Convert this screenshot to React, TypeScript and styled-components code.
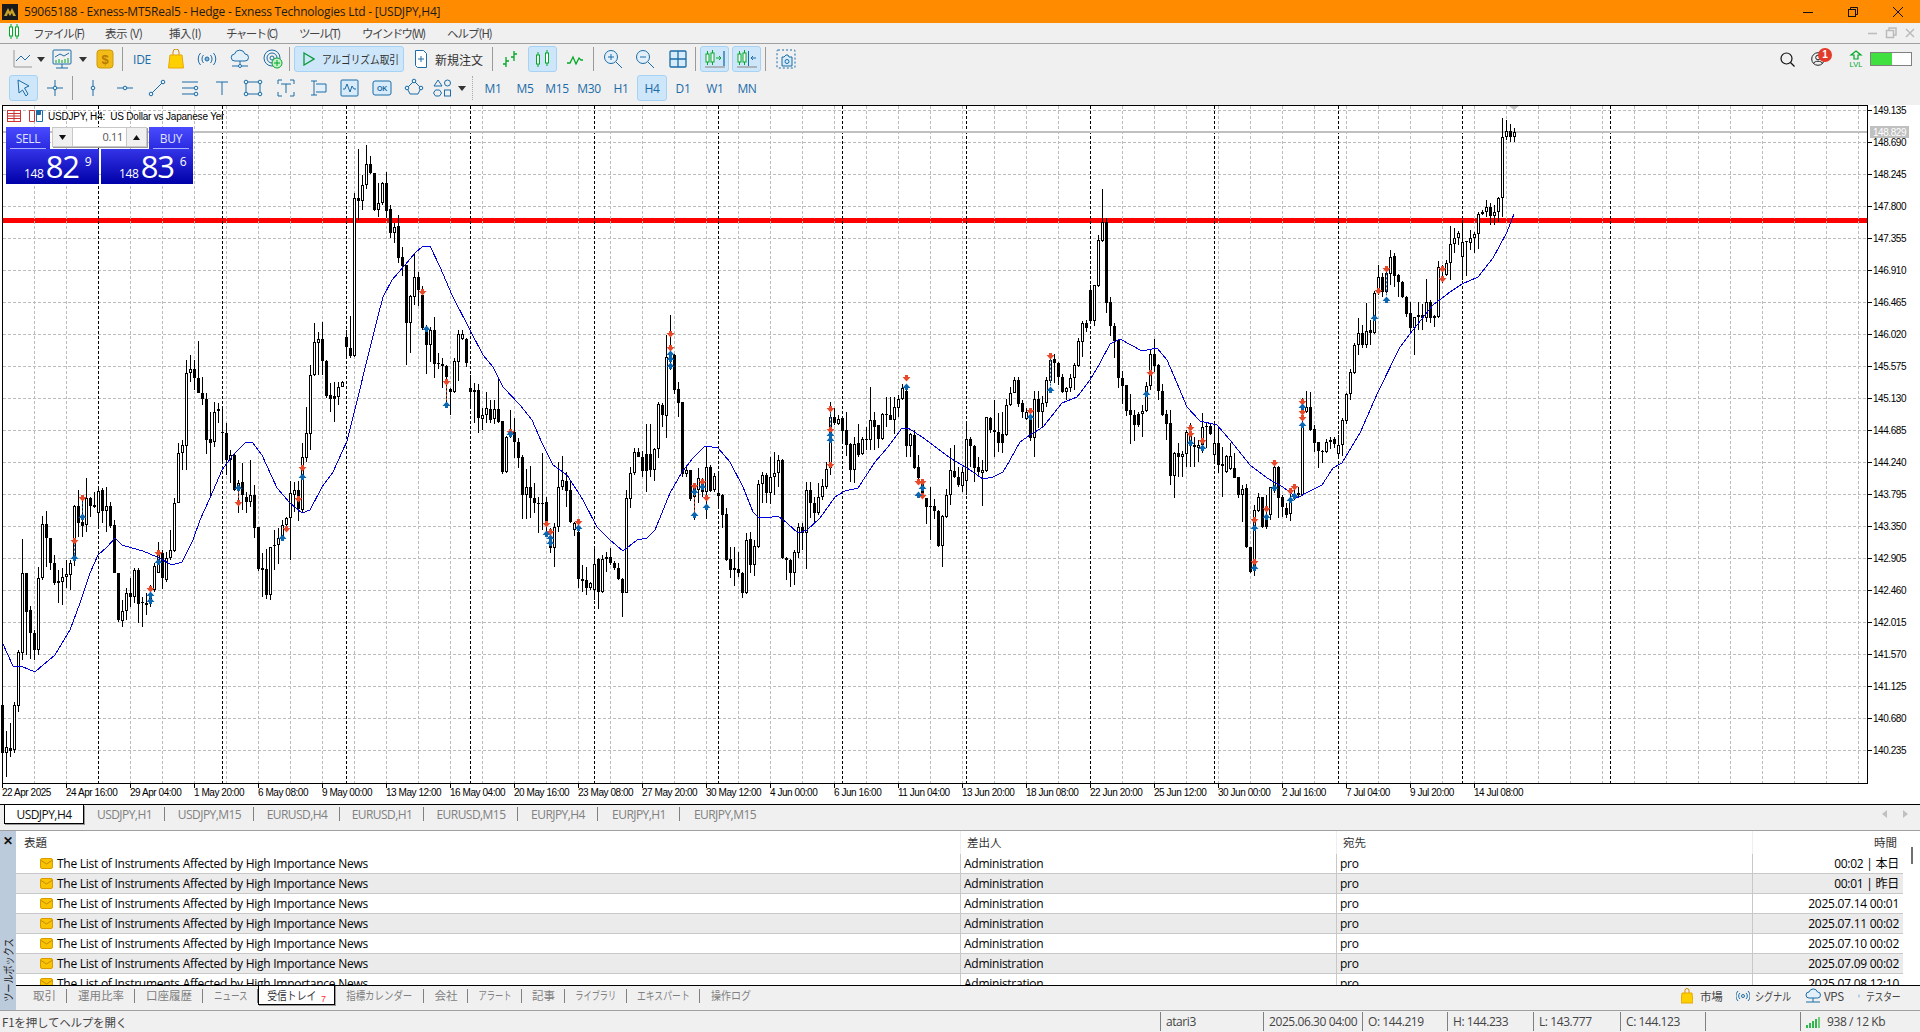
import React from "react";
import styled, { createGlobalStyle } from "styled-components";

const UI = `"Open Sans", "Noto Sans CJK JP", sans-serif`;
const JP = `"Noto Sans CJK JP", "Open Sans", sans-serif`;
const BLUE = "#1b6ca8";
const GREEN = "#00a826";

const Global = createGlobalStyle`
  html, body { margin: 0; padding: 0; overflow: hidden; background: #f0f0f0; }
  * { box-sizing: border-box; }
`;

const Page = styled.div`
  width: 1920px;
  height: 1032px;
  display: flex;
  flex-direction: column;
  overflow: hidden;
  background: #f0f0f0;
  font-family: ${UI};
  color: #333;
`;

const TitleBar = styled.div`
  height: 23px;
  background: #ff8c00;
  display: flex;
  align-items: center;
  padding-left: 2px;
  color: #1a1a1a;
  font-size: 12px;
  letter-spacing: -0.22px;
`;

const TitleLogo = styled.div`
  width: 16px;
  height: 16px;
  background: #1a1a1a;
  margin-right: 6px;
  display: flex;
  align-items: center;
  justify-content: center;
`;

const WinButtons = styled.div`
  margin-left: auto;
  display: flex;
`;

const WinButton = styled.div`
  width: 45px;
  height: 23px;
  display: flex;
  align-items: center;
  justify-content: center;
`;

const MenuBar = styled.div`
  height: 21px;
  border-bottom: 1px solid #a0a0a0;
  display: flex;
  align-items: center;
  padding-left: 8px;
  font-family: ${JP};
  font-size: 11.5px;
  color: #444;
`;

const MenuItem = styled.div<{ $w: number; $sp?: number }>`
  width: ${p => p.$w}px;
  white-space: nowrap;
  letter-spacing: ${p => p.$sp ?? -0.4}px;
`;

const SubButtons = styled.div`
  margin-left: auto;
  display: flex;
  gap: 7px;
  padding-right: 4px;
`;

const Toolbars = styled.div`
  height: 61px;
  display: flex;
  flex-direction: column;
`;

const ToolRow = styled.div<{ $pad: number; $lift?: number }>`
  height: 30px;
  margin-top: ${p => -(p.$lift ?? 0)}px;
  display: flex;
  align-items: center;
  padding-left: ${p => p.$pad}px;
`;

const Tool = styled.div<{ $w: number; $on?: boolean }>`
  width: ${p => p.$w}px;
  height: 26px;
  flex: none;
  display: flex;
  align-items: center;
  justify-content: center;
  color: ${BLUE};
  font-size: 12px;
  letter-spacing: -0.3px;
  border-radius: 3px;
  border: 1px solid ${p => (p.$on ? "#a6d3f5" : "transparent")};
  background: ${p => (p.$on ? "#cde6f9" : "transparent")};
`;

const Sep = styled.div`
  width: 1px;
  height: 24px;
  background: #9a9a9a;
  flex: none;
`;

const Dotted = styled.div`
  width: 1px;
  height: 24px;
  flex: none;
  border-left: 1px dotted #aaa;
`;

const AlgoButton = styled(Tool)`
  color: #333;
  font-family: ${JP};
  justify-content: flex-start;
  padding-left: 8px;
  gap: 7px;
  font-size: 11.5px;
  letter-spacing: 0;
  white-space: nowrap;
  overflow: hidden;
  svg { flex: none; }
`;

const OrderButton = styled(Tool)`
  color: #333;
  font-family: ${JP};
  justify-content: flex-start;
  padding-left: 9px;
  gap: 7px;
  font-size: 12px;
  letter-spacing: 0;
`;

const ToolRight = styled.div`
  margin-left: auto;
  padding-right: 8px;
  display: flex;
  align-items: center;
`;

const Badge = styled.div`
  position: absolute;
  top: -3px;
  left: 7px;
  width: 14px;
  height: 14px;
  border-radius: 50%;
  background: #e23b2a;
  color: #fff;
  font: bold 10px/14px "Liberation Sans", sans-serif;
  text-align: center;
`;

const Profile = styled.div`
  position: relative;
  width: 16px;
  height: 16px;
  display: flex;
  align-items: center;
  margin: 0 21px 0 16px;
`;

const LevelBar = styled.div`
  width: 42px;
  height: 14px;
  margin-left: 6px;
  border: 1px solid #808080;
  background: #fff;
`;

const LevelFill = styled.div`
  height: 100%;
  background: #40e040;
`;

const ChartBox = styled.div`
  height: 700px;
  position: relative;
  background: #fff;
  border-bottom: 1px solid #000;
  overflow: hidden;
  flex: none;
`;

const ChartSvg = styled.svg`
  display: block;
`;

const ChartLabel = styled.div`
  position: absolute;
  top: 4px;
  left: 7px;
  width: 217px;
  overflow: hidden;
  display: flex;
  align-items: center;
  height: 14px;
  white-space: pre;
  font: 10px "Liberation Sans", sans-serif;
  letter-spacing: -0.2px;
  color: #000;
`;

const LabelIcon = styled.svg<{ $gap: number }>`
  flex: none;
  margin-right: ${p => p.$gap}px;
`;

const OneClick = styled.div`
  position: absolute;
  top: 22px;
  left: 6px;
  width: 187px;
  height: 57px;
  display: grid;
  grid-template-columns: 93px 94px;
  grid-template-rows: 22px 35px;
  color: #fff;
`;

const TopCell = styled.div<{ $right?: boolean }>`
  display: flex;
  justify-content: ${p => (p.$right ? "flex-end" : "flex-start")};
`;

const Side = styled.div`
  width: 44px;
  height: 22px;
  background: linear-gradient(#4a4aff, #2a2ae0);
  display: flex;
  align-items: center;
  justify-content: center;
  font-size: 12px;
  letter-spacing: -0.3px;
  color: #dfe3ff;
  position: relative;
  &::after {
    content: "";
    position: absolute;
    left: 4px;
    right: 4px;
    bottom: 0;
    height: 1px;
    background: #aab0ff;
  }
`;

const Spinner = styled.div`
  position: absolute;
  top: 0;
  left: 46px;
  width: 95px;
  height: 20px;
  background: #fff;
  border: 1px solid #c8c8c8;
  display: grid;
  grid-template-columns: 19px 1fr 19px;
  font-size: 11px;
  color: #555;
  box-shadow: 1px 1px 0 #999;
`;

const SpinBtn = styled.div`
  background: #f0f0f0;
  display: flex;
  align-items: center;
  justify-content: center;
`;

const SpinValue = styled.div`
  border-left: 1px solid #c8c8c8;
  border-right: 1px solid #c8c8c8;
  text-align: right;
  padding-right: 3px;
  line-height: 18px;
  letter-spacing: -0.3px;
`;

const PriceCell = styled.div<{ $right?: boolean }>`
  width: ${p => (p.$right ? 92 : 93)}px;
  margin-left: ${p => (p.$right ? 2 : 0)}px;
  background: linear-gradient(#3434e8, #0000a8);
  display: flex;
  align-items: flex-end;
  padding: 0 0 2px 18px;
`;

const Small = styled.span`
  font-size: 12px;
  line-height: 14px;
  margin-bottom: 1px;
  letter-spacing: -0.3px;
`;

const Big = styled.span`
  font-size: 31px;
  line-height: 31px;
  letter-spacing: -1.2px;
  margin-left: 2px;
`;

const Tiny = styled.span`
  font-size: 12px;
  line-height: 14px;
  margin: 0 0 13px 6px;
`;

const ChartTabs = styled.div`
  height: 26px;
  flex: none;
  border-bottom: 1px solid #a0a0a0;
  display: flex;
  padding-left: 4px;
  position: relative;
  font-size: 12px;
  letter-spacing: -0.55px;
`;

const ChartTab = styled.div<{ $w: number; $on?: boolean; $last?: boolean }>`
  width: ${p => p.$w}px;
  height: ${p => (p.$on ? 19 : 25)}px;
  flex: none;
  display: flex;
  align-items: ${p => (p.$on ? "center" : "flex-start")};
  justify-content: center;
  padding-top: ${p => (p.$on ? 0 : 1)}px;
  line-height: 17px;
  color: ${p => (p.$on ? "#111" : "#808080")};
  position: relative;
  background: ${p => (p.$on ? "#fff" : "transparent")};
  border: ${p => (p.$on ? "1px solid #000" : "none")};
  border-top: none;
  box-shadow: ${p => (p.$on ? "1px 1px 0 #999" : "none")};
  &::after {
    content: "";
    display: ${p => (p.$on || p.$last ? "none" : "block")};
    position: absolute;
    right: 0;
    top: 2px;
    width: 1px;
    height: 14px;
    background: #808080;
  }
`;

const TabArrows = styled.div`
  margin-left: auto;
  padding: 5px 12px 0 0;
  display: flex;
  gap: 16px;
  height: 20px;
`;

const Toolbox = styled.div`
  height: 180px;
  flex: none;
  border-bottom: 1px solid #a0a0a0;
  display: flex;
`;

const SideRail = styled.div`
  width: 16px;
  flex: none;
  background: #bccbdb;
  display: flex;
  flex-direction: column;
  align-items: center;
  justify-content: space-between;
  color: #111;
`;

const RailClose = styled.div`
  margin-top: 3px;
  font: bold 12px "Liberation Sans", sans-serif;
`;

const RailText = styled.div`
  writing-mode: vertical-rl;
  text-orientation: sideways;
  transform: rotate(180deg) scaleY(0.79);
  font-family: ${JP};
  font-size: 11.5px;
  line-height: 14px;
  color: #222;
  white-space: nowrap;
`;

const BoxMain = styled.div`
  flex: 1;
  display: flex;
  flex-direction: column;
  min-width: 0;
`;

const ListArea = styled.div`
  height: 155px;
  flex: none;
  border-bottom: 1px solid #000;
  background: #fff;
  display: flex;
  overflow: hidden;
`;

const Table = styled.div`
  flex: 1;
  min-width: 0;
`;

const ScrollRail = styled.div`
  width: 17px;
  flex: none;
  padding: 16px 0 0 8px;
`;

const Thumb = styled.div`
  width: 2px;
  height: 17px;
  background: #707070;
`;

const Row = styled.div<{ $head?: boolean; $alt?: boolean }>`
  display: grid;
  grid-template-columns: 944px 376px 416px 151px;
  height: ${p => (p.$head ? 23 : 20)}px;
  background: ${p => (p.$alt ? "#ebebeb" : "#fff")};
  border-bottom: ${p => (p.$head ? "none" : "1px solid #c8c8c8")};
  font-size: 12px;
  letter-spacing: -0.26px;
  color: #000;
`;

const HeadCell = styled.div<{ $end?: boolean; $first?: boolean }>`
  font-family: ${JP};
  font-size: 11.5px;
  letter-spacing: 0;
  color: #333;
  line-height: 22px;
  border-left: ${p => (p.$first ? "none" : "1px solid #eee")};
  padding: ${p => (p.$end ? "0 6px 0 0" : p.$first ? "0 0 0 8px" : "0 0 0 6px")};
  text-align: ${p => (p.$end ? "right" : "left")};
`;

const Cell = styled.div<{ $end?: boolean; $first?: boolean }>`
  line-height: 19px;
  border-left: ${p => (p.$first ? "none" : "1px solid #c8c8c8")};
  padding: ${p => (p.$end ? "0 4px 0 0" : p.$first ? "0 0 0 24px" : "0 0 0 3px")};
  text-align: ${p => (p.$end ? "right" : "left")};
  display: ${p => (p.$first ? "flex" : "block")};
  align-items: center;
  gap: 4px;
  white-space: nowrap;
`;

const BottomTabs = styled.div`
  height: 24px;
  flex: none;
  display: flex;
  padding-left: 6px;
  font-family: ${JP};
  font-size: 11.5px;
`;

const BottomTab = styled.div<{ $w: number; $on?: boolean; $last?: boolean }>`
  width: ${p => p.$w}px;
  height: ${p => (p.$on ? 20 : 24)}px;
  margin-top: ${p => (p.$on ? -1 : 0)}px;
  padding-right: ${p => (p.$on ? 10 : 0)}px;
  flex: none;
  text-align: center;
  line-height: 18px;
  position: relative;
  white-space: nowrap;
  color: ${p => (p.$on ? "#333" : "#808080")};
  background: ${p => (p.$on ? "#fff" : "transparent")};
  border: ${p => (p.$on ? "1px solid #000" : "none")};
  box-shadow: ${p => (p.$on ? "1px 1px 0 #999" : "none")};
  &::after {
    content: "";
    display: ${p => (p.$on || p.$last ? "none" : "block")};
    position: absolute;
    right: 0;
    top: 3px;
    width: 1px;
    height: 14px;
    background: #808080;
  }
`;

// narrower katakana, the reference font sets them proportionally
const Squeeze = styled.span<{ $sx: number; $left?: boolean }>`
  display: inline-block;
  transform: scaleX(${p => p.$sx});
  transform-origin: ${p => (p.$left ? "left" : "center")};
`;

const Count = styled.span`
  position: absolute;
  left: 62px;
  top: 8px;
  color: #ff3030;
  font: 9px "Liberation Sans", sans-serif;
`;

const Services = styled.div`
  margin-left: auto;
  display: flex;
  align-items: center;
  height: 19px;
  padding-right: 9px;
  color: #444;
`;

const Service = styled.div<{ $w: number; $gap: number }>`
  width: ${p => p.$w}px;
  display: flex;
  align-items: center;
  gap: ${p => p.$gap}px;
  white-space: nowrap;
  letter-spacing: -0.3px;
`;

const StatusBar = styled.div`
  height: 21px;
  flex: none;
  display: flex;
  align-items: center;
  font-size: 12px;
  letter-spacing: -0.42px;
  color: #444;
`;

const StatusHelp = styled.div`
  flex: 1;
  padding-left: 2px;
  font-family: ${JP};
  font-size: 11.5px;
  letter-spacing: -0.2px;
`;

const StatusCell = styled.div<{ $w: number }>`
  width: ${p => p.$w}px;
  flex: none;
  height: 19px;
  line-height: 19px;
  border-left: 1px solid #808080;
  padding-left: 5px;
  white-space: nowrap;
  display: flex;
  align-items: center;
  gap: 6px;
`;

// [body top, body bottom, white?, high, low], traced from the chart at 3x
type Bar = [number, number, number, number, number];

const barsA: Bar[] = [
  [1725,1869,0,1725,1869],[1851,1869,1,1803,1941],[1854,1863,0,1779,1881],[1725,1860,1,1716,1869],[1566,1728,1,1560,1746],
  [1330,1570,1,1228,1590],[1330,1445,0,1330,1575],[1440,1510,0,1428,1586],[1510,1560,0,1500,1590],[1345,1560,1,1310,1575],
  [1182,1345,1,1158,1350],[1182,1225,0,1143,1310],[1225,1298,0,1225,1320],[1298,1358,0,1275,1365],[1354,1358,0,1320,1420],
  [1342,1355,1,1315,1425],[1332,1342,1,1290,1375],[1298,1335,1,1290,1380],[1128,1285,1,1125,1307],[1128,1180,0,1080,1220],
  [1175,1188,0,1100,1220],[1105,1185,1,1045,1205],[1105,1128,0,1100,1160],[1126,1130,0,1085,1135],[1082,1150,1,1075,1190],
  [1080,1142,0,1075,1180],[1128,1142,1,1070,1205],[1128,1188,0,1115,1195],[1186,1330,0,1170,1330],[1330,1470,0,1330,1475],
  [1444,1472,1,1410,1492],[1390,1444,1,1375,1470],[1390,1402,0,1345,1430],[1320,1400,1,1315,1420],[1320,1422,0,1315,1480],
  [1415,1418,0,1400,1492],[1418,1425,0,1390,1455],[1400,1410,1,1365,1430],[1308,1380,1,1300,1385],[1268,1330,1,1235,1330],
  [1270,1345,0,1260,1378],[1285,1350,1,1265,1355],[1260,1285,1,1200,1290],[1118,1262,1,1105,1265],[970,1118,1,940,1120],
  [945,970,1,930,1020],[730,947,1,690,1020],[718,730,1,675,755],[718,745,0,690,780],[745,788,0,633,790],
  [788,808,0,742,825],[808,930,0,790,972],[928,938,0,845,1100],[845,935,1,815,950],[838,843,0,820,880],
  [905,910,0,830,1000],[910,990,0,878,1035],[975,990,1,960,1060],[975,1080,0,970,1082],[1060,1080,1,1050,1150],
  [1055,1095,0,998,1140],[1100,1115,0,1085,1148],[1095,1115,1,990,1130],[1095,1195,0,1065,1225],[1192,1318,0,1190,1322],
  [1315,1320,0,1270,1400],[1318,1396,0,1258,1408],[1250,1396,1,1250,1410],[1244,1248,0,1200,1320],[1225,1245,1,1195,1302],
  [1185,1225,1,1170,1230],[1165,1185,1,1160,1205],[1090,1165,1,1052,1290],[1080,1095,1,1055,1145],[1080,1138,0,1052,1172],
  [982,1140,1,940,1148],[910,985,1,832,995],[735,912,1,705,960],[637,735,1,580,738],[627,640,1,605,735],
  [627,692,0,575,735],[692,798,0,690,805],[795,808,0,760,845],[798,808,0,755,875],[770,802,1,755,825],
  [755,770,1,752,772],[622,652,0,600,688],[655,678,0,558,685],[205,678,1,188,680],[205,212,0,58,270],
  [165,212,1,135,240],[103,165,1,45,178],[103,130,0,78,132],[130,240,0,130,242],[218,240,1,160,262],
  [160,220,1,155,225],[158,242,0,125,265],[238,310,0,225,325],[290,310,1,278,340],[288,384,0,255,400],
  [382,408,0,352,438],[406,580,0,405,705],[498,580,1,495,670],[442,500,1,370,525],[442,480,0,425,528],
  [495,595,0,468,600],[600,645,0,585,732],[600,645,1,590,695],[600,702,0,562,745],[698,703,0,668,716],
  [703,708,0,685,775],[708,740,0,705,835],[778,785,0,775,855],[692,785,1,685,788],[612,695,1,600,752],
  [612,628,1,600,630],[628,698,0,625,712],[775,785,0,735,835],[780,785,0,760,880],[780,865,0,762,908],
  [855,868,1,835,900],[835,855,1,785,880],[838,870,0,810,880],[838,868,1,810,882],[838,875,0,740,878],
  [873,1025,0,872,1032],[920,1025,1,918,1028],[905,920,1,840,925],[905,935,0,865,985],[935,985,0,925,1015],
];

const barsB: Bar[] = [
  [530,645,0,525,718],[622,645,1,568,718],[622,655,0,558,715],[655,668,0,610,700],[668,672,0,650,760],
  [668,670,0,520,750],[665,722,0,650,760],[790,805,0,745,818],[740,805,1,730,860],[622,740,1,545,755],
  [600,622,1,528,630],[602,632,0,575,680],[630,725,0,600,730],[730,750,1,725,768],[755,898,0,740,925],
  [898,902,0,855,935],[900,925,0,860,945],[910,925,1,905,930],[853,930,1,800,960],[838,935,0,835,988],
  [838,935,1,825,938],[832,838,1,815,875],[832,850,0,805,855],[850,865,0,842,870],[865,898,0,850,900],
  [897,938,0,895,1010],[655,938,1,630,940],[580,658,1,560,685],[517,580,1,505,585],[517,530,0,505,530],
  [530,572,0,512,590],[522,572,0,432,635],[522,570,0,432,590],[508,570,1,505,603],[372,508,1,365,535],
  [375,405,0,370,440],[230,408,1,165,475],[225,232,1,105,270],[225,330,0,222,342],[328,368,0,305,410],
  [366,582,0,365,590],[570,582,1,555,590],[570,658,0,570,662],[615,650,1,610,720],[595,630,1,565,668],
  [600,635,0,595,650],[562,635,1,502,718],[560,632,0,555,635],[588,630,1,580,635],[640,648,0,582,682],
  [645,705,0,642,745],[703,840,0,685,842],[838,870,0,800,895],[865,870,0,800,918],[868,880,0,815,890],
  [880,940,0,875,955],[780,940,1,758,942],[778,855,0,755,880],[798,855,1,780,888],[612,800,1,600,805],
  [585,612,1,575,670],[585,640,0,580,670],[590,640,1,530,672],[580,590,1,515,645],[540,580,1,525,620],
  [540,835,0,538,838],[835,840,0,830,900],[840,878,0,838,920],[817,878,1,810,915],[742,818,1,728,835],
  [742,758,0,730,810],[630,758,1,605,868],[630,668,0,605,715],[668,700,0,650,730],[652,700,1,610,705],
  [618,652,1,598,660],[568,620,1,545,628],[412,565,1,365,585],[412,430,0,385,435],[418,432,1,405,435],
  [413,452,0,410,490],[450,495,0,395,528],[492,570,0,490,605],[492,570,1,470,610],[490,525,0,433,530],
  [478,522,1,470,525],[476,480,0,440,510],[420,480,1,322,510],[420,440,0,395,510],[435,478,0,435,505],
  [402,478,1,398,480],[402,406,0,350,440],[405,420,0,350,420],[382,420,1,350,462],[358,384,1,345,412],
  [325,358,1,312,360],[332,498,0,330,530],[462,498,1,460,530],[465,565,0,450,568],[562,595,0,525,598],
  [610,650,0,598,655],[655,682,0,655,732],[677,682,1,622,780],[677,692,0,658,718],[692,798,0,690,800],
  [708,798,1,705,862],[645,710,1,628,715],[570,645,1,505,675],[573,592,0,495,595],[592,615,0,560,620],
  [575,618,1,560,635],[478,602,1,432,645],[478,497,0,470,560],[497,565,0,495,605],[562,575,0,530,590],
  [570,578,1,540,678],[412,572,1,410,575],[415,450,0,410,460],[450,456,0,360,530],[455,488,0,400,515],
  [462,488,0,395,520],[376,466,1,358,468],[338,376,1,320,378],[300,338,1,290,340],[300,372,0,290,380],
];

const barsC: Bar[] = [
  [698,725,0,690,745],[725,748,1,715,750],[750,805,0,715,812],[688,805,1,662,860],[688,725,0,662,775],
  [698,725,1,678,772],[630,698,1,620,710],[570,632,1,548,640],[568,578,0,552,640],[578,620,0,575,645],
  [622,665,0,612,670],[655,665,1,650,690],[625,655,1,612,665],[585,625,1,580,660],[512,587,1,505,590],
  [460,515,1,452,560],[458,475,0,450,487],[360,452,0,345,455],[346,452,1,345,468],[210,347,1,195,350],
  [155,212,1,58,215],[155,398,0,145,430],[397,467,0,382,497],[467,513,0,460,565],[510,625,0,508,655],
  [625,648,0,603,702],[645,722,0,645,738],[720,735,0,672,822],[735,765,0,720,812],[732,765,0,725,770],
  [722,733,1,705,800],[648,722,1,635,725],[552,648,1,540,660],[552,588,0,508,605],[585,662,0,582,690],
  [662,735,0,642,738],[732,762,0,720,810],[760,918,0,720,945],[848,918,1,845,985],[848,860,0,820,920],
  [852,860,1,842,920],[785,852,1,780,892],[785,825,1,758,890],[825,832,1,800,892],[825,835,1,810,875],
  [772,825,1,730,850],[768,772,0,755,835],[768,792,0,760,795],[820,855,1,765,878],[820,885,0,770,908],
  [883,888,0,830,980],[858,905,1,855,910],[858,898,1,820,900],[895,925,0,848,925],[922,975,0,920,985],
  [958,975,1,945,1055],[955,1132,0,942,1135],[1130,1205,0,1130,1210],[1020,1190,1,1005,1218],[980,1022,1,970,1025],
  [982,1070,0,980,1075],[1040,1070,0,975,1078],[952,1035,1,950,1050],[892,950,1,880,970],[890,985,0,888,1045],
  [982,1012,0,975,1040],[1015,1035,0,1000,1045],[985,1032,1,960,1052],[975,985,1,945,990],[970,975,0,950,985],
  [770,975,1,685,978],[710,725,1,662,730],[710,780,0,665,783],[778,818,0,765,845],[815,842,0,815,893],
  [842,846,0,840,878],[815,845,1,808,850],[810,815,1,802,838],[808,822,0,802,835],[825,852,1,795,865],
  [750,825,1,745,858],[672,752,1,668,762],[605,672,1,598,690],[525,608,1,518,612],[488,525,1,445,555],
  [488,525,0,465,535],[483,525,1,400,535],[480,490,0,450,525],[370,490,1,362,492],[322,370,1,285,375],
  [322,365,0,310,380],[310,365,1,290,370],[260,312,1,240,345],[258,318,0,250,352],[316,335,0,312,382],
  [335,382,0,332,385],[380,432,0,378,442],[430,475,0,395,490],[442,475,1,440,555],[435,442,1,395,480],
  [435,445,0,402,480],[397,443,1,328,455],[397,445,0,390,458],[438,445,0,435,470],[292,440,1,272,445],
  [290,300,1,285,338],[278,315,1,270,318],[222,278,1,168,330],[203,222,1,175,250],[190,203,1,182,225],
  [215,262,1,150,330],[213,216,0,213,318],[203,218,1,180,240],[192,203,1,185,250],[132,192,1,125,238],
  [125,133,1,120,135],[112,125,1,90,140],[112,138,0,100,165],[125,138,1,105,165],[85,125,1,80,155],
  [-99,84,1,-156,141],[-117,-99,1,-150,-90],[-117,-99,0,-138,-84],[-114,-99,1,-126,-84],
];

const realBars = [
  ...barsA.map(b => ({ b, base: 130 })),
  ...barsB.map(b => ({ b, base: 280 })),
  ...barsC.map(b => ({ b, base: 170 })),
].map(({ b, base }) => b.map((v, i) => (i === 2 ? v : Math.round(base + v / 3))));

const maLine =
  "3,644 13,666 23,667 35,672 43,665 55,655 70,630 80,603 90,573 98,555 107,547 115,538 122,545 132,548 143,551 157,557 172,565 182,562 193,540 200,520 210,498 222,470 233,455 245,443 252,442 262,455 277,488 290,503 302,513 310,510 322,487 333,472 347,441 358,397 367,360 377,320 383,297 392,280 405,265 415,253 422,247 430,246 440,267 452,295 470,330 483,355 493,367 503,387 520,405 532,420 542,443 553,465 567,475 583,500 597,527 610,540 623,551 637,540 647,538 655,530 670,493 682,472 693,458 705,446 718,448 730,462 743,487 753,512 758,517 767,518 778,516 787,523 798,533 807,530 820,518 835,497 845,491 858,488 875,462 888,447 902,428 908,428 922,437 933,445 950,458 967,468 983,479 993,477 1003,472 1010,460 1020,442 1030,435 1043,427 1062,403 1077,397 1090,380 1100,363 1110,344 1120,339 1142,351 1157,348 1167,360 1177,383 1187,407 1200,421 1217,425 1230,440 1250,465 1267,478 1283,487 1297,498 1308,492 1322,485 1333,468 1342,463 1360,433 1378,392 1400,347 1413,330 1433,305 1450,292 1462,284 1478,277 1493,258 1507,232 1514,214";

const z9 = (x: number, y: number) => [x / 3, 130 + y / 3];
const z10 = (x: number, y: number) => [500 + x / 3, 280 + y / 3];
const z11 = (x: number, y: number) => [1000 + x / 3, 170 + y / 3];

const redMarks = [
  ...[[223,1232],[247,1105],[475,1268],[451,1378],[715,1118],[895,1108],[859,1196],[907,1014],[1267,485],[1339,757],[1531,905]].map(p => z9(p[0], p[1])),
  ...[[139,733],[151,757],[235,727],[511,163],[511,203],[583,617],[607,607],[619,653],[991,386],[991,450],[991,555],[1219,293],[1267,605],[1267,648],[1255,607]].map(p => z10(p[0], p[1])),
  ...[[91,722],[151,557],[451,610],[571,775],[571,792],[607,812],[763,1050],[763,1175],[799,1016],[823,878],[871,962],[883,950],[907,695],[907,727],[907,745],[1135,362],[1159,298],[1327,296],[1327,326]].map(p => z11(p[0], p[1])),
];

const blueMarks = [
  ...[[223,1283],[247,1160],[475,1295],[451,1395],[451,1413],[715,1073],[847,1223],[907,1041],[1279,598],[1339,825],[1531,912]].map(p => z9(p[0], p[1])),
  ...[[139,762],[151,775],[151,790],[235,743],[511,222],[511,237],[511,258],[583,637],[583,705],[607,622],[619,681],[991,465],[991,481],[1219,320],[1267,625],[1255,645]].map(p => z10(p[0], p[1])),
  ...[[91,742],[151,660],[439,672],[571,820],[607,835],[763,1074],[763,1195],[799,1040],[823,955],[871,990],[883,978],[907,710],[907,765],[1123,443],[1159,390]].map(p => z11(p[0], p[1])),
];

const links: [number[], number[], string][] = [
  [z9(223, 1232), z9(223, 1283), "#0a66b0"],
  [z9(247, 1105), z9(247, 1160), "#0a66b0"],
  [z9(715, 1073), z9(715, 1118), "#e64a2a"],
  [z9(1339, 757), z9(1339, 825), "#e64a2a"],
  [z10(583, 617), z10(583, 705), "#e64a2a"],
  [z10(991, 386), z10(991, 450), "#0a66b0"],
  [z11(151, 557), z11(151, 660), "#0a66b0"],
  [z11(1159, 298), z11(1159, 390), "#0a66b0"],
];

const priceLabels = ["149.135","148.690","148.245","147.800","147.355","146.910","146.465","146.020","145.575","145.130","144.685","144.240","143.795","143.350","142.905","142.460","142.015","141.570","141.125","140.680","140.235"];
const dateLabels = ["22 Apr 2025","24 Apr 16:00","29 Apr 04:00","1 May 20:00","6 May 08:00","9 May 00:00","13 May 12:00","16 May 04:00","20 May 16:00","23 May 08:00","27 May 20:00","30 May 12:00","4 Jun 00:00","6 Jun 16:00","11 Jun 04:00","13 Jun 20:00","18 Jun 08:00","22 Jun 20:00","25 Jun 12:00","30 Jun 00:00","2 Jul 16:00","7 Jul 04:00","9 Jul 20:00","14 Jul 08:00"];
const darkGrid = [98, 222, 346, 470, 594, 718, 842, 966, 1090, 1214, 1338, 1462, 1610];

const col = (x: number) => Math.floor(x) + 0.5;

const Chart = () => (
  <ChartSvg width={1920} height={699} viewBox="0 105 1920 699">
    <rect x={3} y={218} width={1864} height={5} fill="#ff0000" />
    <g stroke="#bcbcbc" strokeDasharray="3 2" shapeRendering="crispEdges">
      {priceLabels.map((_, i) => (
        <line key={i} x1={3} x2={1867} y1={110.5 + i * 32} y2={110.5 + i * 32} />
      ))}
      {Array.from({ length: 58 }, (_, i) => (
        <line key={i} x1={34.5 + i * 32} x2={34.5 + i * 32} y1={106} y2={783} />
      ))}
    </g>
    <g stroke="#000" strokeDasharray="3 2" shapeRendering="crispEdges">
      {darkGrid.map(x => (
        <line key={x} x1={x + 0.5} x2={x + 0.5} y1={106} y2={783} />
      ))}
    </g>
    <rect x={3} y={131} width={1864} height={2} fill="#c0c0c0" />
    <polygon points="1509,106 1519,106 1514,110" fill="#c0c0c0" />
    <g shapeRendering="crispEdges">
      {realBars.map((b, k) => {
        const x = 2 + 4 * k;
        return (
          <g key={k}>
            <rect x={x} y={b[3]} width={1} height={Math.max(b[4] - b[3], 1)} fill="#000" />
            <rect x={x - 1} y={b[0]} width={3} height={Math.max(b[1] - b[0], 1)} fill="#000" />
            {b[2] === 1 && b[1] - b[0] > 2 && (
              <rect x={x} y={b[0] + 1} width={1} height={b[1] - b[0] - 2} fill="#fff" />
            )}
          </g>
        );
      })}
    </g>
    <polyline points={maLine} fill="none" stroke="#0000d8" strokeWidth={1} shapeRendering="crispEdges" />
    {links.map(([a, b, c], i) => (
      <line key={i} x1={col(a[0])} x2={col(a[0])} y1={a[1]} y2={b[1]} stroke={c} strokeDasharray="2 2" />
    ))}
    {redMarks.map((p, i) => (
      <path
        key={i}
        transform={`translate(${col(p[0])} ${Math.round(p[1])})`}
        d="M-1.5-3h3v2h2.500L0 3.500-4-1h2.500z"
        fill="#e64a2a"
      />
    ))}
    {blueMarks.map((p, i) => (
      <path
        key={i}
        transform={`translate(${col(p[0])} ${Math.round(p[1])})`}
        d="M-1.5 3h3V1h2.500L0-3.500-4 1h2.500z"
        fill="#0a66b0"
      />
    ))}
    <g stroke="#000" shapeRendering="crispEdges">
      <line x1={2.5} x2={2.5} y1={105} y2={784} />
      <line x1={2} x2={1868} y1={105.5} y2={105.5} />
      <line x1={1867.5} x2={1867.5} y1={105} y2={784} />
      <line x1={2} x2={1868} y1={783.5} y2={783.5} />
      {priceLabels.map((_, i) => (
        <line key={i} x1={1868} x2={1872} y1={110.5 + i * 32} y2={110.5 + i * 32} />
      ))}
      {dateLabels.map((_, i) => (
        <line key={i} x1={2.5 + i * 64} x2={2.5 + i * 64} y1={784} y2={788} />
      ))}
    </g>
    <g fontFamily='"Liberation Sans", sans-serif' fontSize={10} fill="#000" letterSpacing={-0.45}>
      {priceLabels.map((t, i) => (
        <text key={t} x={1873} y={114 + i * 32}>{t}</text>
      ))}
      {dateLabels.map((t, i) => (
        <text key={t} x={2 + i * 64} y={796}>{t}</text>
      ))}
    </g>
    <rect x={1870} y={126} width={39} height={12} fill="#c0c0c0" />
    <text x={1873} y={136} fontFamily='"Liberation Sans", sans-serif' fontSize={10} fill="#fff" letterSpacing={-0.45}>148.829</text>
  </ChartSvg>
);

const Ico = ({ w = 20, h = 20, children }: { w?: number; h?: number; children: React.ReactNode }) => (
  <svg width={w} height={h} viewBox={`0 0 ${w} ${h}`} fill="none" stroke={BLUE} strokeWidth={1}>
    {children}
  </svg>
);

const Drop = () => (
  <svg width={8} height={5} viewBox="0 0 8 5"><path d="M0 0h8L4 5z" fill="#333" /></svg>
);

const Candle = ({ x, y, h, c = GREEN }: { x: number; y: number; h: number; c?: string }) => (
  <g stroke={c}>
    <path d={`M${x + 1.5} ${y - 3}v${h + 6}`} />
    <rect x={x} y={y} width={3} height={h} fill="#fff" />
  </g>
);

const node = (x: number, y: number) => <circle cx={x} cy={y} r={1.8} fill="#e8f2fa" />;

const icons = {
  line: (
    <Ico>
      <path d="M1 1v17h18" stroke="#999" />
      <path d="M3 12l5-5 4 4 5-5" />
    </Ico>
  ),
  panel: (
    <Ico w={22}>
      <rect x={2} y={1} width={18} height={14} rx={1} />
      <path d="M5 19h12M11 15v4" />
      <path d="M4 8l5-3 4 2 5-3" />
      <path d="M5 14v-3M8 14v-4M11 14v-3M14 14v-4M17 14v-5" stroke={GREEN} />
    </Ico>
  ),
  dollar: (
    <svg width={18} height={20} viewBox="0 0 18 20">
      <rect x={1} y={1} width={16} height={18} rx={3} fill="#f2bb18" stroke="#cf9a08" />
      <text x={9} y={15} textAnchor="middle" fontSize={13} fontWeight={700} fill="#b67a00" fontFamily='"Liberation Sans", sans-serif'>$</text>
    </svg>
  ),
  bag: (
    <svg width={16} height={20} viewBox="0 0 16 20">
      <path d="M5 6V3a3 3 0 016 0v3" fill="none" stroke="#d68a00" />
      <path d="M2 6h12l1.500 13H.5z" fill="#ffd000" stroke="#e6a800" />
    </svg>
  ),
  signal: (
    <Ico w={20} h={14}>
      <circle cx={10} cy={7} r={2} fill="#7fb4dc" />
      <path d="M6.500 3a6 6 0 000 8M13.500 3a6 6 0 010 8M3.500 1a9 9 0 000 12M16.500 1a9 9 0 010 12" />
    </Ico>
  ),
  cloud: (
    <Ico>
      <path d="M5 12a3.500 3.500 0 01-.5-7A5.500 5.500 0 0115 5a3.500 3.500 0 010 7z" fill="#e3f0fa" />
      <path d="M10 12v5M2 17h16" />
      <circle cx={10} cy={17} r={1.500} fill="#fff" />
    </Ico>
  ),
  web: (
    <svg width={20} height={20} viewBox="0 0 20 20" fill="none" stroke={BLUE}>
      <circle cx={9} cy={9} r={8} />
      <circle cx={9} cy={9} r={5} />
      <circle cx={9} cy={9} r={2} />
      <circle cx={14} cy={14} r={5} fill="#c8f0cc" stroke={GREEN} />
      <path d="M14 11v6M11 14h6" stroke={GREEN} />
    </svg>
  ),
  play: (
    <svg width={12} height={14} viewBox="0 0 12 14"><path d="M1 1l10 6-10 6z" fill="none" stroke="#0a9a3a" strokeWidth={1.300} /></svg>
  ),
  order: (
    <Ico w={14} h={20}>
      <path d="M1.500 1.500h8l3 3v14h-9l-2-2z" fill="#fff" />
      <path d="M7 7v6M4 10h6" />
    </Ico>
  ),
  bars: (
    <Ico>
      <path d="M5 8v10M2 15h3M5 12h3M13 2v10M10 8h3M13 5h3" stroke={GREEN} strokeWidth={1.300} />
    </Ico>
  ),
  candles: (
    <Ico>
      <Candle x={3.500} y={6} h={9} /><Candle x={12.500} y={4} h={10} />
    </Ico>
  ),
  linechart: (
    <Ico>
      <path d="M2 14h3l3-6 3 7 3-6 2 2h2" stroke={GREEN} strokeWidth={1.300} />
    </Ico>
  ),
  zoomIn: (
    <Ico>
      <circle cx={8} cy={8} r={6.500} fill="#e3f0fa" />
      <path d="M13 13l6 6M5 8h6M8 5v6" />
    </Ico>
  ),
  zoomOut: (
    <Ico>
      <circle cx={8} cy={8} r={6.500} fill="#e3f0fa" />
      <path d="M13 13l6 6M5 8h6" />
    </Ico>
  ),
  grid: (
    <Ico w={18} h={18}>
      <rect x={1} y={1} width={16} height={16} rx={1} fill="#d7ebfa" strokeWidth={1.300} />
      <path d="M9 1v16M1 9h16" strokeWidth={1.300} />
    </Ico>
  ),
  scroll: (
    <Ico w={22}>
      <Candle x={2} y={5} h={8} /><Candle x={7} y={4} h={9} />
      <path d="M12 9h5M15 7l2 2-2 2" stroke={GREEN} />
      <path d="M20 2v15" strokeWidth={1.300} />
      <path d="M1 18h20" stroke="#999" strokeWidth={1.300} />
    </Ico>
  ),
  shift: (
    <Ico w={22}>
      <Candle x={2} y={5} h={8} /><Candle x={7} y={4} h={9} />
      <path d="M12.500 2v15" />
      <path d="M20 9h-5M17 7l-2 2 2 2" />
      <path d="M1 18h20" stroke="#999" strokeWidth={1.300} />
    </Ico>
  ),
  camera: (
    <Ico>
      <rect x={1} y={1} width={18} height={18} rx={1} strokeDasharray="2 2" />
      <path d="M6 8h2l2-2h2l1 2h3v9H6z" fill="#d7ebfa" />
      <circle cx={11} cy={12.500} r={2} />
    </Ico>
  ),
  cursor: (
    <Ico>
      <path d="M4 2l11 6-4.500 2L14 16l-2 2-3.500-6L5 15z" fill="#d7ebfa" />
    </Ico>
  ),
  cross: <Ico><path d="M2 10h16M10 2v16" />{node(10, 10)}</Ico>,
  vertical: <Ico><path d="M10 2v16" />{node(10, 10)}</Ico>,
  horizontal: <Ico><path d="M2 10h16" />{node(10, 10)}</Ico>,
  trend: <Ico><path d="M4 16L16 4" />{node(4, 16)}{node(16, 4)}</Ico>,
  channel: <Ico><path d="M2 4h16M2 10h14M2 16h14" />{node(16, 10)}{node(16, 16)}</Ico>,
  text: <Ico><path d="M4 4h12M10 4v13" /></Ico>,
  rect: <Ico><rect x={3} y={4} width={14} height={12} />{node(3, 4)}{node(17, 4)}{node(3, 16)}{node(17, 16)}</Ico>,
  label: <Ico><path d="M2 6V2h4M14 2h4v4M2 14v4h4M14 18h4v-4M5 6h10M10 6v9" /></Ico>,
  edit: <Ico><path d="M3 3h6M3 17h6M6 3v14" /><path d="M8 6h10v8H8" fill="#e3f0fa" /></Ico>,
  chart: <Ico><rect x={1} y={2} width={17} height={16} rx={1} fill="#d7ebfa" /><path d="M3 11h2l2-5 3 8 2-6 2 3h2" /></Ico>,
  ok: (
    <Ico w={20} h={16}>
      <rect x={1} y={1} width={18} height={14} rx={2} fill="#d7ebfa" />
      <text x={10} y={11} textAnchor="middle" fontSize={7} fontWeight={700} fill={BLUE} stroke="none" fontFamily='"Liberation Sans", sans-serif'>OK</text>
    </Ico>
  ),
  polygon: <Ico><path d="M10 3l7 7-3 6H6l-3-6z" />{node(10, 3)}{node(17, 10)}{node(3, 10)}</Ico>,
  shapes: (
    <Ico>
      <path d="M5 2l4 6H1z" />
      <circle cx={14.500} cy={5} r={3} />
      <path d="M2.500 12h4l2 3-2 3h-4l-2-3z" />
      <rect x={11.500} y={12} width={6} height={6} />
    </Ico>
  ),
};

const tabs: [string, number][] = [
  ["USDJPY,H4", 80],
  ["USDJPY,H1", 81],
  ["USDJPY,M15", 89],
  ["EURUSD,H4", 86],
  ["EURUSD,H1", 84],
  ["EURUSD,M15", 94],
  ["EURJPY,H4", 80],
  ["EURJPY,H1", 82],
  ["EURJPY,M15", 90],
];

const times = ["00:02 | 本日", "00:01 | 昨日", "2025.07.14 00:01", "2025.07.11 00:02", "2025.07.10 00:02", "2025.07.09 00:02", "2025.07.08 12:10"];

const boxTabs: [string, number, number][] = [
  ["取引", 45, 1],
  ["運用比率", 68, 1],
  ["口座履歴", 68, 1],
  ["ニュース", 55, 0.74],
  ["受信トレイ", 77, 0.85],
  ["指標カレンダー", 89, 0.82],
  ["会社", 44, 1],
  ["アラート", 54, 0.72],
  ["記事", 43, 1],
  ["ライブラリ", 62, 0.71],
  ["エキスパート", 73, 0.77],
  ["操作ログ", 62, 0.87],
];

const Envelope = () => (
  <svg width={13} height={11} viewBox="0 0 13 11">
    <rect x={0.5} y={0.5} width={12} height={10} rx={1.500} fill="#f8c400" stroke="#d99a00" />
    <path d="M1 2.500l5.500 3.500 5.500-3.500" fill="none" stroke="#c98a00" />
  </svg>
);

export default function App() {
  return (
    <Page>
      <Global />
      <TitleBar>
        <TitleLogo>
          <svg width={12} height={8} viewBox="0 0 12 8">
            <path d="M0 8l4-8 2 4 2-4 4 8H9L8 5 6 8 4 5 3 8z" fill="#c9a227" />
          </svg>
        </TitleLogo>
        59065188 - Exness-MT5Real5 - Hedge - Exness Technologies Ltd - [USDJPY,H4]
        <WinButtons>
          <WinButton>
            <svg width={10} height={10} viewBox="0 0 10 10"><path d="M0 5.500h10" stroke="#111" /></svg>
          </WinButton>
          <WinButton>
            <svg width={10} height={10} viewBox="0 0 10 10" fill="none" stroke="#111">
              <rect x={0.5} y={2.500} width={7} height={7} /><path d="M2.500 2.500v-2h7v7h-2" />
            </svg>
          </WinButton>
          <WinButton>
            <svg width={10} height={10} viewBox="0 0 10 10"><path d="M0 0l10 10M10 0L0 10" stroke="#111" /></svg>
          </WinButton>
        </WinButtons>
      </TitleBar>
      <MenuBar>
        <MenuItem $w={25}>
          <svg width={12} height={15} viewBox="0 0 12 15" fill="none" stroke={GREEN}>
            <path d="M3 0v15M9 0v15" /><rect x={1.500} y={3} width={3} height={9} fill="#fff" /><rect x={7.500} y={3} width={3} height={9} fill="#fff" />
          </svg>
        </MenuItem>
        <MenuItem $w={72} $sp={-1.5}>ファイル (F)</MenuItem>
        <MenuItem $w={64}>表示 (V)</MenuItem>
        <MenuItem $w={57}>挿入(I)</MenuItem>
        <MenuItem $w={73} $sp={-1.6}>チャート (C)</MenuItem>
        <MenuItem $w={63} $sp={-1.4}>ツール(T)</MenuItem>
        <MenuItem $w={85} $sp={-1.6}>ウインドウ(W)</MenuItem>
        <MenuItem $w={60} $sp={-1}>ヘルプ(H)</MenuItem>
        <SubButtons>
          <svg width={12} height={12} viewBox="0 0 12 12"><path d="M2 6.500h9" stroke="#bbb" strokeWidth={1.500} /></svg>
          <svg width={12} height={12} viewBox="0 0 12 12" fill="none" stroke="#bbb" strokeWidth={1.500}><rect x={1.500} y={3.500} width={7} height={7} /><path d="M4 3V1h7v7H9" /></svg>
          <svg width={12} height={12} viewBox="0 0 12 12"><path d="M2 2l8 8M10 2l-8 8" stroke="#bbb" strokeWidth={1.500} /></svg>
        </SubButtons>
      </MenuBar>
      <Toolbars>
        <ToolRow $pad={10}>
          <Tool $w={26}>{icons.line}</Tool>
          <Tool $w={10}><Drop /></Tool>
          <Tool $w={32}>{icons.panel}</Tool>
          <Tool $w={10}><Drop /></Tool>
          <Tool $w={34}>{icons.dollar}</Tool>
          <Sep />
          <Tool $w={38}>IDE</Tool>
          <Tool $w={30}>{icons.bag}</Tool>
          <Tool $w={32}>{icons.signal}</Tool>
          <Tool $w={33}>{icons.cloud}</Tool>
          <Tool $w={33}>{icons.web}</Tool>
          <Sep />
          <Tool $w={4} />
          <AlgoButton $w={110} $on>{icons.play}<Squeeze $sx={0.84} $left>アルゴリズム取引</Squeeze></AlgoButton>
          <OrderButton $w={88}>{icons.order}新規注文</OrderButton>
          <Sep />
          <Tool $w={35}>{icons.bars}</Tool>
          <Tool $w={29} $on>{icons.candles}</Tool>
          <Tool $w={36}>{icons.linechart}</Tool>
          <Sep />
          <Tool $w={3} />
          <Tool $w={32}>{icons.zoomIn}</Tool>
          <Tool $w={32}>{icons.zoomOut}</Tool>
          <Tool $w={34}>{icons.grid}</Tool>
          <Sep />
          <Tool $w={4} />
          <Tool $w={29} $on>{icons.scroll}</Tool>
          <Tool $w={3} />
          <Tool $w={29} $on>{icons.shift}</Tool>
          <Tool $w={4} />
          <Sep />
          <Tool $w={40}>{icons.camera}</Tool>
          <ToolRight>
            <svg width={15} height={15} viewBox="0 0 15 15" fill="none" stroke="#111" strokeWidth={1.200}>
              <circle cx={6.500} cy={6.500} r={5.500} /><path d="M10.500 10.500l4 4" />
            </svg>
            <Profile>
              <svg width={14} height={14} viewBox="0 0 14 14" fill="none" stroke="#222">
                <circle cx={7} cy={7} r={6.300} /><circle cx={7} cy={5.500} r={2.300} /><path d="M2.500 11.500c1-3 8-3 9 0" />
              </svg>
              <Badge>1</Badge>
            </Profile>
            <svg width={16} height={18} viewBox="0 0 16 18">
              <path d="M8 1l5 4h-3v4H6V5H3z" fill="none" stroke={GREEN} strokeWidth={1.200} />
              <text x={8} y={17} textAnchor="middle" fontSize={7.500} fill={GREEN} fontFamily='"Liberation Sans", sans-serif'>LVL</text>
            </svg>
            <LevelBar>
              <LevelFill style={{ width: "52%" }} />
            </LevelBar>
          </ToolRight>
        </ToolRow>
        <ToolRow $pad={9} $lift={1}>
          <Tool $w={29} $on>{icons.cursor}</Tool>
          <Tool $w={34}>{icons.cross}</Tool>
          <Sep />
          <Tool $w={4} />
          <Tool $w={32}>{icons.vertical}</Tool>
          <Tool $w={32}>{icons.horizontal}</Tool>
          <Tool $w={32}>{icons.trend}</Tool>
          <Tool $w={33}>{icons.channel}</Tool>
          <Tool $w={31}>{icons.text}</Tool>
          <Tool $w={32}>{icons.rect}</Tool>
          <Tool $w={33}>{icons.label}</Tool>
          <Tool $w={32}>{icons.edit}</Tool>
          <Tool $w={32}>{icons.chart}</Tool>
          <Tool $w={32}>{icons.ok}</Tool>
          <Tool $w={31}>{icons.polygon}</Tool>
          <Tool $w={28}>{icons.shapes}</Tool>
          <Tool $w={10}><Drop /></Tool>
          <Tool $w={5} />
          <Dotted />
          <Tool $w={4} />
          {["M1", "M5", "M15", "M30", "H1"].map(t => (
            <Tool key={t} $w={32}>{t}</Tool>
          ))}
          <Tool $w={30} $on>H4</Tool>
          {["D1", "W1", "MN"].map(t => (
            <Tool key={t} $w={32}>{t}</Tool>
          ))}
        </ToolRow>
      </Toolbars>
      <ChartBox>
        <Chart />
        <ChartLabel>
          <LabelIcon $gap={8} width={14} height={12} viewBox="0 0 14 12" fill="none" stroke="#c33">
            <rect x={0.5} y={0.5} width={13} height={11} />
            <path d="M0 3.500h14M0 6h14M0 8.500h14M7 0v12" />
          </LabelIcon>
          <LabelIcon $gap={5} width={14} height={12} viewBox="0 0 14 12" fill="none">
            <path d="M.5.5h5v11h-5z" stroke="#c33" />
            <path d="M7.500.5h6v11h-6z" stroke={BLUE} />
            <path d="M7.500.5h4v4h-4z" fill={BLUE} stroke={BLUE} />
          </LabelIcon>
          {"USDJPY, H4:  US Dollar vs Japanese Yen"}
        </ChartLabel>
        <OneClick>
          <TopCell><Side>SELL</Side></TopCell>
          <TopCell $right><Side>BUY</Side></TopCell>
          <PriceCell><Small>148</Small><Big>82</Big><Tiny>9</Tiny></PriceCell>
          <PriceCell $right><Small>148</Small><Big>83</Big><Tiny>6</Tiny></PriceCell>
          <Spinner>
            <SpinBtn>
              <svg width={7} height={5} viewBox="0 0 7 5"><path d="M0 0h7L3.500 5z" fill="#111" /></svg>
            </SpinBtn>
            <SpinValue>0.11</SpinValue>
            <SpinBtn>
              <svg width={7} height={5} viewBox="0 0 7 5"><path d="M0 5h7L3.500 0z" fill="#111" /></svg>
            </SpinBtn>
          </Spinner>
        </OneClick>
      </ChartBox>
      <ChartTabs>
        {tabs.map(([t, w], i) => (
          <ChartTab key={t} $w={w} $on={i === 0} $last={i === tabs.length - 1}>{t}</ChartTab>
        ))}
        <TabArrows>
          <svg width={5} height={8} viewBox="0 0 5 8"><path d="M5 0v8L0 4z" fill="#c0c0c0" /></svg>
          <svg width={5} height={8} viewBox="0 0 5 8"><path d="M0 0v8l5-4z" fill="#c0c0c0" /></svg>
        </TabArrows>
      </ChartTabs>
      <Toolbox>
        <SideRail>
          <RailClose>✕</RailClose>
          <RailText>ツールボックス</RailText>
        </SideRail>
        <BoxMain>
          <ListArea>
            <Table>
              <Row $head>
                <HeadCell $first>表題</HeadCell>
                <HeadCell>差出人</HeadCell>
                <HeadCell>宛先</HeadCell>
                <HeadCell $end>時間</HeadCell>
              </Row>
              {times.map((t, i) => (
                <Row key={t} $alt={i % 2 === 1}>
                  <Cell $first><Envelope />The List of Instruments Affected by High Importance News</Cell>
                  <Cell>Administration</Cell>
                  <Cell>pro</Cell>
                  <Cell $end>{t}</Cell>
                </Row>
              ))}
            </Table>
            <ScrollRail><Thumb /></ScrollRail>
          </ListArea>
          <BottomTabs>
            {boxTabs.map(([t, w, sx], i) => (
              <BottomTab key={t} $w={w} $on={i === 4} $last={i === 11}>
                <Squeeze $sx={sx}>{t}</Squeeze>
                {i === 4 && <Count>7</Count>}
              </BottomTab>
            ))}
            <Services>
              <Service $w={55} $gap={7}>
                <svg width={12} height={16} viewBox="0 0 12 16">
                  <path d="M4 5V2.500a2 2 0 014 0V5" fill="none" stroke="#d68a00" /><path d="M1 5h10l1 10H0z" fill="#ffd000" stroke="#e6a800" />
                </svg>
                市場
              </Service>
              <Service $w={69} $gap={5}>
                <svg width={14} height={10} viewBox="0 0 14 10" fill="none" stroke={BLUE}>
                  <circle cx={7} cy={5} r={1.500} /><path d="M4 2a4 4 0 000 6M10 2a4 4 0 010 6M2 0a7 7 0 000 10M12 0a7 7 0 010 10" />
                </svg>
                <Squeeze $sx={0.8} $left>シグナル</Squeeze>
              </Service>
              <Service $w={53} $gap={3}>
                <svg width={16} height={16} viewBox="0 0 16 16" fill="none" stroke={BLUE}>
                  <path d="M4 10a3 3 0 010-6 4.500 4.500 0 018.500 0 3 3 0 010 6z" fill="#e3f0fa" /><path d="M8 10v4M1 14h14" />
                </svg>
                VPS
              </Service>
              <Service $w={53} $gap={6}>
                <svg width={12} height={16} viewBox="0 0 12 16" fill="none" stroke={BLUE}>
                  <rect x={1.500} y={2} width={9} height={12} rx={1} fill="#d7ebfa" /><path d="M0 4h1.500M0 7h1.500M0 10h1.500M10.500 4H12M10.500 7H12M10.500 10H12" />
                </svg>
                <Squeeze $sx={0.77} $left>テスター</Squeeze>
              </Service>
            </Services>
          </BottomTabs>
        </BoxMain>
      </Toolbox>
      <StatusBar>
        <StatusHelp>F1を押してヘルプを開く</StatusHelp>
        <StatusCell $w={103}>atari3</StatusCell>
        <StatusCell $w={99}>2025.06.30 04:00</StatusCell>
        <StatusCell $w={85}>O: 144.219</StatusCell>
        <StatusCell $w={86}>H: 144.233</StatusCell>
        <StatusCell $w={87}>L: 143.777</StatusCell>
        <StatusCell $w={85}>C: 144.123</StatusCell>
        <StatusCell $w={95} />
        <StatusCell $w={120}>
          <svg width={15} height={12} viewBox="0 0 15 12" fill="none" strokeWidth={1.600}>
            <path d="M1 12V9M4 12V7M7 12V5M10 12V3" stroke={GREEN} /><path d="M13 12V1" stroke="#55c060" />
          </svg>
          938 / 12 Kb
        </StatusCell>
      </StatusBar>
    </Page>
  );
}
